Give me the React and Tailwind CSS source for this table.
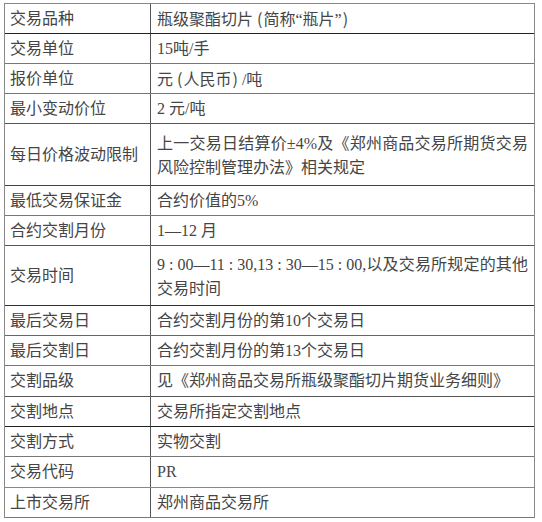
import React from "react";

const O = () => <span className="pl-[4px] pr-[1px] font-['Noto_Sans_CJK_SC',sans-serif]">(</span>;
const E = () => <span className="pl-[1px] pr-[4px] font-['Noto_Sans_CJK_SC',sans-serif]">)</span>;
const C = () => <span className="px-[4px]">:</span>;

const rows = [
  {
    l: "交易品种",
    r: [<>瓶级聚酯切片<O />简称“瓶片”<E /></>],
    h: "h-[30px]",
    b: "border-[#222]",
  },
  { l: "交易单位", r: ["15吨/手"], h: "h-[30px]", b: "border-[#777]" },
  { l: "报价单位", r: [<>元<O />人民币<E />/吨</>], h: "h-[30px]", b: "border-[#777]" },
  { l: "最小变动价位", r: ["2 元/吨"], h: "h-[30px]", b: "border-[#555]" },
  {
    l: "每日价格波动限制",
    r: ["上一交易日结算价±4%及《郑州商品交易所期货交易", "风险控制管理办法》相关规定"],
    h: "h-[62px]",
    b: "border-[#444]",
  },
  { l: "最低交易保证金", r: ["合约价值的5%"], h: "h-[30px]", b: "border-[#777]" },
  { l: "合约交割月份", r: ["1—12 月"], h: "h-[30px]", b: "border-[#555]" },
  {
    l: "交易时间",
    r: [
      <>9<C />00—11<C />30,13<C />30—15<C />00,以及交易所规定的其他</>,
      "交易时间",
    ],
    h: "h-[60px]",
    b: "border-[#333]",
  },
  { l: "最后交易日", r: ["合约交割月份的第10个交易日"], h: "h-[30px]", b: "border-[#666]" },
  { l: "最后交割日", r: ["合约交割月份的第13个交易日"], h: "h-[30px]", b: "border-[#777]" },
  { l: "交割品级", r: ["见《郑州商品交易所瓶级聚酯切片期货业务细则》"], h: "h-[31px]", b: "border-[#555]" },
  { l: "交割地点", r: ["交易所指定交割地点"], h: "h-[30px]", b: "border-[#222]" },
  { l: "交割方式", r: ["实物交割"], h: "h-[30px]", b: "border-[#777]" },
  { l: "交易代码", r: ["PR"], h: "h-[31px]", b: "border-[#888]" },
  { l: "上市交易所", r: ["郑州商品交易所"], h: "h-[30px]", b: "border-[#777]" },
];

export default function App() {
  return (
    <div className="w-[542px] h-[522px] bg-white pl-[4px] pt-[3px] font-['Liberation_Serif','Noto_Sans_CJK_SC',serif] text-[16px] text-[#454545]">
      <div className="w-[531px] border-t border-l border-r border-[#888]">
        {rows.map((row, i) => (
          <div key={i} className={`flex border-b ${row.h} ${row.b}`}>
            <div className="w-[146px] shrink-0 border-r border-[#555] pl-[5px] flex items-center">
              <span className="leading-[24px]">{row.l}</span>
            </div>
            <div className="flex-1 min-w-0 pl-[6px] pr-[6px] flex flex-col justify-center">
              {row.r.length > 1 ? (
                <>
                  <div className="leading-[24px] pt-[2px] text-justify [text-align-last:justify] whitespace-nowrap">
                    {row.r[0]}
                  </div>
                  <div className="leading-[24px]">{row.r[1]}</div>
                </>
              ) : (
                <div className="leading-[24px] whitespace-nowrap">{row.r[0]}</div>
              )}
            </div>
          </div>
        ))}
      </div>
    </div>
  );
}
